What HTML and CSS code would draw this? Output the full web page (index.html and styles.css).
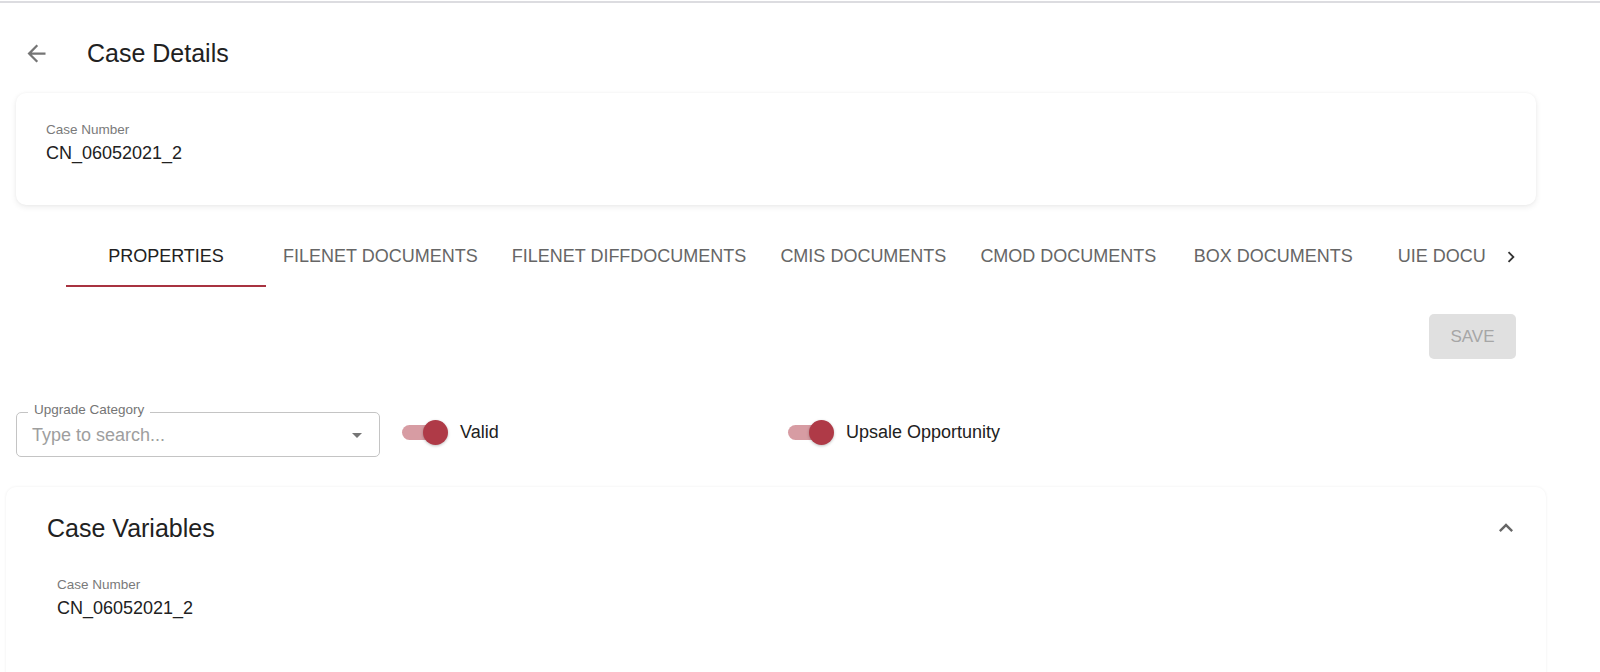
FILE: index.html
```html
<!DOCTYPE html>
<html lang="en">
<head>
<meta charset="utf-8">
<title>Case Details</title>
<link rel="stylesheet" href="styles.css">
</head>
<body>
<div class="topline"></div>
<div class="page">
  <header class="page-header">
    <button class="back-btn" aria-label="Back">
      <svg class="back-icon" viewBox="0 0 24 24" width="27" height="27"><path d="M20 11H7.83l5.59-5.59L12 4l-8 8 8 8 1.41-1.41L7.83 13H20v-2z"/></svg>
    </button>
    <h1 class="page-title">Case Details</h1>
  </header>

  <section class="card summary-card">
    <div class="field">
      <div class="field-label">Case Number</div>
      <div class="field-value">CN_06052021_2</div>
    </div>
  </section>

  <nav class="tabs">
    <div class="tabs-spacer"></div>
    <div class="tabs-scroller">
      <div class="tab active">PROPERTIES</div>
      <div class="tab">FILENET DOCUMENTS</div>
      <div class="tab">FILENET DIFFDOCUMENTS</div>
      <div class="tab">CMIS DOCUMENTS</div>
      <div class="tab">CMOD DOCUMENTS</div>
      <div class="tab">BOX DOCUMENTS</div>
      <div class="tab">UIE DOCUMENTS</div>
    </div>
    <button class="tabs-next" aria-label="Scroll right">
      <svg viewBox="0 0 24 24" width="22" height="22"><path d="M8.59 16.59 13.17 12 8.59 7.41 10 6l6 6-6 6-1.41-1.41z"/></svg>
    </button>
  </nav>

  <div class="actions">
    <button class="save-btn" disabled>SAVE</button>
  </div>

  <div class="form-row">
    <div class="select">
      <span class="select-legend">Upgrade Category</span>
      <span class="select-placeholder">Type to search...</span>
      <svg class="select-arrow" viewBox="7 10 10 5" width="10" height="5"><path d="M7 10l5 5 5-5z"/></svg>
    </div>
    <label class="switch-field">
      <span class="switch"><span class="switch-track"></span><span class="switch-thumb"></span></span>
      <span class="switch-label">Valid</span>
    </label>
    <label class="switch-field">
      <span class="switch"><span class="switch-track"></span><span class="switch-thumb"></span></span>
      <span class="switch-label">Upsale Opportunity</span>
    </label>
  </div>

  <section class="card vars-card">
    <div class="vars-header">
      <h2 class="vars-title">Case Variables</h2>
      <svg class="collapse-icon" viewBox="0 0 24 24" width="28" height="28"><path d="M12 8l-6 6 1.41 1.41L12 10.83l4.59 4.58L18 14z"/></svg>
    </div>
    <div class="vars-body">
      <div class="field">
        <div class="field-label">Case Number</div>
        <div class="field-value">CN_06052021_2</div>
      </div>
    </div>
  </section>
</div>
</body>
</html>
```

FILE: styles.css
```css
* { box-sizing: border-box; }

html, body {
  margin: 0;
  padding: 0;
  background: #ffffff;
  overflow: hidden;
}

body {
  font-family: "Liberation Sans", Arial, sans-serif;
  color: #212121;
}

.topline {
  height: 2px;
  margin-top: 1px;
  background: #dcdce0;
}

.page {
  padding: 0 64px 0 16px;
}

.page-header {
  display: flex;
  align-items: center;
  height: 44px;
  margin-top: 28px;
}

.back-btn {
  display: flex;
  align-items: center;
  justify-content: center;
  width: 27px;
  height: 27px;
  padding: 0;
  margin-left: 7px;
  border: 0;
  background: transparent;
}

.back-icon { fill: #757575; display: block; }

.page-title {
  margin: 0 0 0 37px;
  font-size: 25px;
  line-height: 30px;
  font-weight: 400;
  color: #212121;
}

.card {
  background: #fff;
  border-radius: 10px;
}

.summary-card {
  margin-top: 18px;
  height: 112px;
  padding: 29px 30px 0;
  box-shadow: 0 2px 6px rgba(0, 0, 0, 0.08), 0 0 3px rgba(0, 0, 0, 0.04);
}

.field-label {
  font-size: 13.5px;
  line-height: 16px;
  color: #7a7a7a;
}

.field-value {
  margin-top: 4px;
  font-size: 18px;
  line-height: 22px;
  color: #212121;
}

.tabs {
  display: flex;
  margin-top: 28px;
  height: 54px;
}

.tabs-spacer { width: 50px; flex: none; }

.tabs-scroller {
  flex: 1;
  display: flex;
  overflow: hidden;
  white-space: nowrap;
}

.tab {
  flex: none;
  min-width: 200px;
  height: 54px;
  padding: 12px 17px 0;
  text-align: center;
  font-size: 18px;
  line-height: 22px;
  color: #666666;
  border-bottom: 2px solid transparent;
}

.tab.active {
  color: #212121;
  border-bottom-color: #a83340;
}

.tabs-next {
  flex: none;
  width: 50px;
  height: 47px;
  padding: 0;
  border: 0;
  background: transparent;
  display: flex;
  align-items: center;
  justify-content: center;
}

.tabs-next svg { fill: #333333; display: block; }

.actions {
  display: flex;
  justify-content: flex-end;
  margin-top: 27px;
  padding-right: 20px;
}

.save-btn {
  width: 87px;
  height: 45px;
  border: 0;
  border-radius: 5px;
  background: #e0e0e0;
  color: #a6a6a6;
  font-family: "Liberation Sans", Arial, sans-serif;
  font-size: 17px;
  padding: 0;
}

.form-row {
  display: grid;
  grid-template-columns: 386px 386px auto;
  align-items: center;
  margin-top: 53px;
}

.select {
  position: relative;
  width: 364px;
  height: 45px;
  border: 1px solid #c4c4c4;
  border-radius: 5px;
  display: flex;
  align-items: center;
  padding-left: 15px;
}

.select-legend {
  position: absolute;
  top: -11px;
  left: 11px;
  padding: 0 6px;
  background: #fff;
  font-size: 13.5px;
  line-height: 16px;
  color: #757575;
}

.select-placeholder {
  flex: 1;
  font-size: 18px;
  line-height: 22px;
  color: #9e9e9e;
}

.select-arrow {
  fill: #757575;
  margin-right: 17px;
  margin-top: 2px;
  display: block;
}

.switch-field {
  display: flex;
  align-items: center;
  margin-bottom: 5px;
}

.switch {
  position: relative;
  width: 46px;
  height: 26px;
  flex: none;
}

.switch-track {
  position: absolute;
  left: 0;
  top: 5.5px;
  width: 40px;
  height: 15px;
  border-radius: 8px;
  background: rgba(175, 58, 71, 0.5);
}

.switch-thumb {
  position: absolute;
  right: 0;
  top: 0.5px;
  width: 25px;
  height: 25px;
  border-radius: 50%;
  background: #af3a47;
  box-shadow: 0 1px 3px rgba(0, 0, 0, 0.25);
}

.switch-label {
  margin-left: 12px;
  font-size: 18px;
  line-height: 22px;
  color: #212121;
}

.vars-card {
  margin: 30px -10px 0;
  min-height: 220px;
  padding: 26px 26px 0 41px;
  box-shadow: 0 0 3px rgba(0, 0, 0, 0.07);
}

.vars-header {
  display: flex;
  align-items: center;
  justify-content: space-between;
  height: 30px;
}

.vars-title {
  margin: 0;
  font-size: 25px;
  line-height: 30px;
  font-weight: 400;
  color: #212121;
}

.collapse-icon { fill: #666666; display: block; }

.vars-body {
  margin-top: 34px;
  padding-left: 10px;
}
```
